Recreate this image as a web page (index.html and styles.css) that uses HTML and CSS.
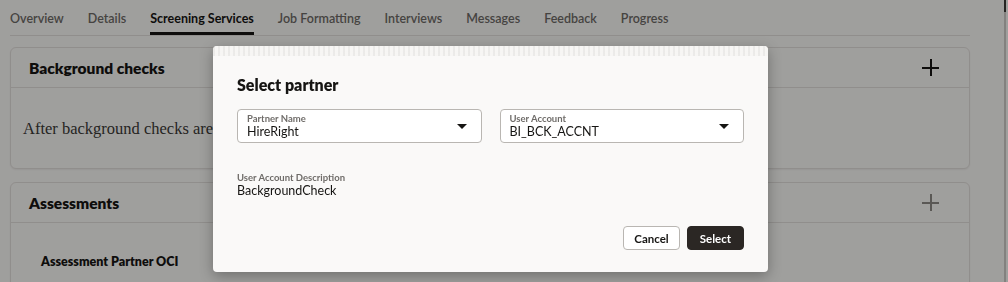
FILE: index.html
```html
<!DOCTYPE html>
<html lang="en">
<head>
    <meta charset="UTF-8">
    <meta name="viewport" content="width=device-width, initial-scale=1.0">
    <title>Screening Services</title>
    <link rel="stylesheet" href="styles.css">
</head>
<body>
    <div class="page">
        <nav class="tabs">
            <a href="#">Overview</a>
            <a href="#">Details</a>
            <a href="#" class="active">Screening Services</a>
            <a href="#">Job Formatting</a>
            <a href="#">Interviews</a>
            <a href="#">Messages</a>
            <a href="#">Feedback</a>
            <a href="#">Progress</a>
        </nav>

        <section class="card">
            <div class="card-header">
                <h3>Background checks</h3>
                <span class="plus"></span>
            </div>
            <div class="card-body">
                <p class="serif">After background checks are added, they'll appear here.</p>
            </div>
        </section>

        <section class="card">
            <div class="card-header">
                <h3>Assessments</h3>
                <span class="plus faded"></span>
            </div>
            <div class="card-body">
                <h4>Assessment Partner OCI</h4>
            </div>
        </section>
    </div>

    <div class="scrollbar"></div>
    <div class="scrim"></div>

    <div class="dialog">
        <div class="dialog-strip"></div>
        <h2>Select partner</h2>

        <div class="field-row">
            <div class="select">
                <div class="select-text">
                    <label>Partner Name</label>
                    <span>HireRight</span>
                </div>
                <span class="caret"></span>
            </div>
            <div class="select">
                <div class="select-text">
                    <label>User Account</label>
                    <span>BI_BCK_ACCNT</span>
                </div>
                <span class="caret"></span>
            </div>
        </div>

        <div class="readonly">
            <label>User Account Description</label>
            <span>BackgroundCheck</span>
        </div>

        <div class="dialog-footer">
            <button class="btn">Cancel</button>
            <button class="btn primary">Select</button>
        </div>
    </div>
</body>
</html>
```

FILE: styles.css
```css
:root {
    --page-bg: #f5f4f2;
    --text-color: #161513;
    --muted: #6f6c69;
    --line: #dedbd7;
}

* {
    margin: 0;
    padding: 0;
    box-sizing: border-box;
}

body {
    font-family: Lato, 'Noto Sans', sans-serif;
    background: var(--page-bg);
    color: var(--text-color);
    height: 282px;
    overflow: hidden;
}

.page {
    padding: 0 38px 0 10px;
}

/* Tabs */
.tabs {
    display: flex;
    gap: 24px;
    border-bottom: 1px solid var(--line);
    height: 36px;
}

.tabs a {
    color: #6b6864;
    text-decoration: none;
    font-size: 12.5px;
    font-weight: 600;
    padding-top: 11px;
    height: 35px;
}

.tabs a.active {
    color: var(--text-color);
    font-weight: 700;
    border-bottom: 3px solid var(--text-color);
}

/* Cards */
.card {
    background: var(--page-bg);
    border: 1px solid var(--line);
    border-radius: 6px;
    margin-top: 11px;
    box-shadow: 0 1px 2px rgba(0,0,0,0.06);
}

.card + .card {
    margin-top: 13px;
}

.card-header {
    display: flex;
    justify-content: space-between;
    align-items: center;
    height: 40px;
    padding: 0 30px 0 18px;
    border-bottom: 1px solid var(--line);
}

.card-header h3 {
    font-size: 15.5px;
    font-weight: 800;
}

.plus {
    position: relative;
    width: 17px;
    height: 17px;
}

.plus::before,
.plus::after {
    content: '';
    position: absolute;
    background: var(--text-color);
}

.plus::before {
    left: 8px;
    top: 0;
    width: 1.5px;
    height: 17px;
}

.plus::after {
    top: 8px;
    left: 0;
    width: 17px;
    height: 1.5px;
}

.plus.faded::before,
.plus.faded::after {
    background: #8a8783;
}

.card-body {
    padding: 31px 12px 29px;
}

.card-body .serif {
    font-family: 'Liberation Serif', 'Times New Roman', serif;
    font-size: 16.5px;
    color: #3a3835;
}

.card-body h4 {
    font-size: 12.5px;
    font-weight: 800;
    padding: 0 18px;
}

/* Scrollbar strip on the right edge */
.scrollbar {
    position: fixed;
    top: 0;
    right: 2px;
    width: 2px;
    height: 100%;
    background: #c9c7c4;
    border-top: 12px solid #3a3835;
}

/* Dialog overlay */
.scrim {
    position: fixed;
    inset: 0;
    background: rgba(0,0,0,0.35);
}

.dialog {
    position: absolute;
    left: 213px;
    top: 46px;
    width: 555px;
    height: 226px;
    background: #faf9f8;
    border-radius: 4px;
    box-shadow: 0 4px 14px rgba(0,0,0,0.3);
    padding: 29px 24px 22px;
    display: flex;
    flex-direction: column;
    overflow: hidden;
}

.dialog-strip {
    position: absolute;
    top: 0;
    left: 0;
    right: 0;
    height: 10px;
    background: repeating-linear-gradient(90deg, #e8e7e5 0 2px, #f6f5f3 2px 5px);
    opacity: 0.8;
}

.dialog h2 {
    font-size: 16px;
    font-weight: 800;
    line-height: 20px;
}

.field-row {
    display: grid;
    grid-template-columns: 1fr 1fr;
    gap: 18px;
    margin-top: 14px;
}

.select {
    display: flex;
    align-items: center;
    justify-content: space-between;
    height: 34px;
    background: #fff;
    border: 1px solid #b9b6b2;
    border-radius: 4px;
    padding: 1px 14px 0 9px;
}

.select-text,
.readonly {
    display: flex;
    flex-direction: column;
}

label {
    font-size: 9.5px;
    line-height: 10px;
    color: var(--muted);
    font-weight: 700;
}

.select-text span,
.readonly span {
    font-size: 12.5px;
    line-height: 15px;
}

.caret {
    width: 0;
    height: 0;
    border-left: 5px solid transparent;
    border-right: 5px solid transparent;
    border-top: 5px solid var(--text-color);
}

.readonly {
    margin-top: 30px;
}

.dialog-footer {
    margin-top: auto;
    display: flex;
    justify-content: flex-end;
    gap: 7px;
}

.btn {
    font-family: inherit;
    font-size: 11.5px;
    font-weight: 700;
    height: 24px;
    padding: 0 10px;
    border-radius: 4px;
    border: 1px solid #b9b6b2;
    background: #fff;
    color: var(--text-color);
}

.btn.primary {
    background: #2b2724;
    border-color: #2b2724;
    color: #fff;
    padding: 0 12px;
}
```
